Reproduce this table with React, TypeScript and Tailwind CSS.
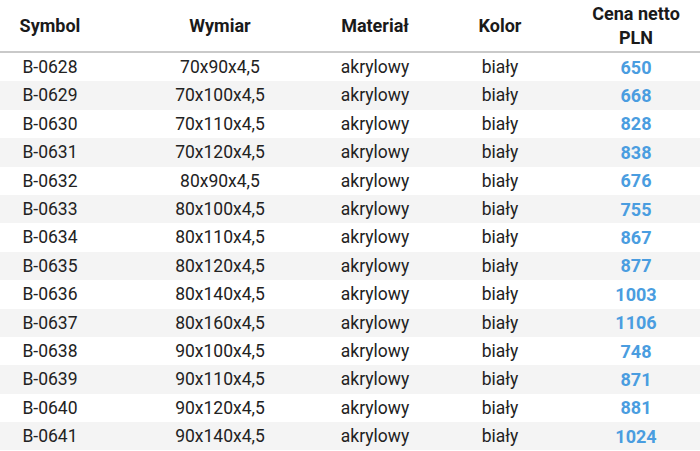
import React from "react";

const rows: [string, string, number][] = [
  ["B-0628", "70x90x4,5", 650],
  ["B-0629", "70x100x4,5", 668],
  ["B-0630", "70x110x4,5", 828],
  ["B-0631", "70x120x4,5", 838],
  ["B-0632", "80x90x4,5", 676],
  ["B-0633", "80x100x4,5", 755],
  ["B-0634", "80x110x4,5", 867],
  ["B-0635", "80x120x4,5", 877],
  ["B-0636", "80x140x4,5", 1003],
  ["B-0637", "80x160x4,5", 1106],
  ["B-0638", "90x100x4,5", 748],
  ["B-0639", "90x110x4,5", 871],
  ["B-0640", "90x120x4,5", 881],
  ["B-0641", "90x140x4,5", 1024],
];

export default function App() {
  return (
    <div
      className="w-[700px] h-[451px] overflow-hidden bg-white text-[#222]"
      style={{ fontFamily: "Roboto, 'Liberation Sans', sans-serif" }}
    >
      {/* header */}
      <div className="flex items-center h-[53px] border-b-2 border-[#c9c9c9] font-bold text-[18px] leading-6 text-[#1a1a1a]">
        <div className="w-[100px] text-center">Symbol</div>
        <div className="w-[240px] text-center">Wymiar</div>
        <div className="w-[70px] text-center whitespace-nowrap">Materiał</div>
        <div className="w-[180px] text-center">Kolor</div>
        <div className="w-[92px] text-center whitespace-nowrap">
          Cena netto
          <br />
          PLN
        </div>
      </div>

      {rows.map(([sym, dim, price], i) => (
        <div
          key={sym}
          className={
            "flex items-center h-[28.4px] text-[17.5px] " +
            (i % 2 === 1 ? "bg-[#f4f4f4]" : "bg-white")
          }
        >
          <div className="w-[100px] text-center">{sym}</div>
          <div className="w-[240px] text-center">{dim}</div>
          <div className="w-[70px] text-center whitespace-nowrap">akrylowy</div>
          <div className="w-[180px] text-center">biały</div>
          <div className="w-[92px] text-center font-bold text-[18px] text-[#4a9de0]">{price}</div>
        </div>
      ))}
    </div>
  );
}
